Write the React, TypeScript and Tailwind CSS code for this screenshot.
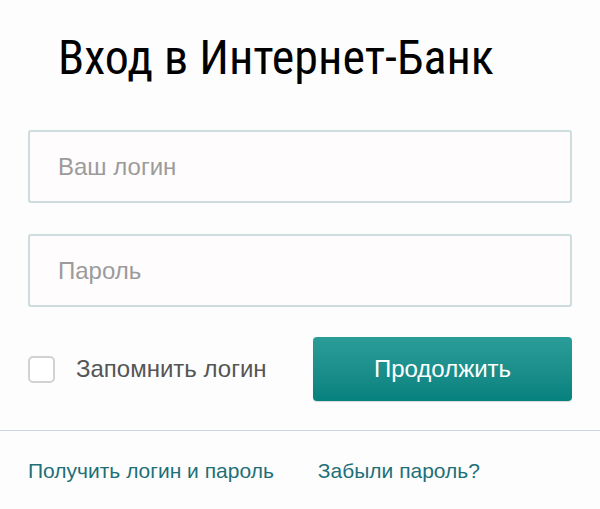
import React, { useState } from 'react';

export default function App() {
  const [login, setLogin] = useState('');
  const [password, setPassword] = useState('');
  const [remember, setRemember] = useState(false);

  return (
    <div className="min-h-[509px] bg-[#fdfdfd] font-['Liberation_Sans',Arial,sans-serif]">
      {/* Form */}
      <div className="px-[28px] pt-[34px]">
        <h1 className="pl-[30px] h-[48px] text-[48px] leading-[48px] text-black font-['Roboto_Condensed','DejaVu_Sans_Condensed',sans-serif] font-normal whitespace-nowrap">
          Вход в Интернет-Банк
        </h1>

        <div className="mt-[48px] flex flex-col gap-[31px]">
          <input
            type="text"
            value={login}
            onChange={(e) => setLogin(e.target.value)}
            placeholder="Ваш логин"
            className="h-[73px] w-full rounded-[3px] border-2 border-[#cddcdc] bg-[#fffcfd] pl-[28px] text-[24px] text-[#333] placeholder-[#9b9b9b] outline-none"
          />
          <input
            type="password"
            value={password}
            onChange={(e) => setPassword(e.target.value)}
            placeholder="Пароль"
            className="h-[73px] w-full rounded-[3px] border-2 border-[#cddcdc] bg-[#fffcfd] pl-[28px] text-[24px] text-[#333] placeholder-[#9b9b9b] outline-none"
          />
        </div>

        <div className="mt-[30px] flex items-center">
          <label className="flex items-center gap-[21px] cursor-pointer">
            <input
              type="checkbox"
              checked={remember}
              onChange={(e) => setRemember(e.target.checked)}
              className="peer sr-only"
            />
            <span className="h-[27px] w-[27px] rounded-[5px] border-2 border-[#d2d2d2] bg-white" />
            <span className="text-[24px] text-[#555]">Запомнить логин</span>
          </label>
          <button className="ml-auto h-[64px] w-[259px] rounded-[4px] bg-gradient-to-b from-[#2b9d99] to-[#06817e] text-[24px] text-white shadow-[0_1px_1px_rgba(0,0,0,0.15)]">
            Продолжить
          </button>
        </div>
      </div>

      {/* Links */}
      <div className="mt-[29px] border-t border-[#cbd6e6] px-[28px] pt-[28px]">
        <div className="flex gap-[44px] text-[21px] leading-[24px] text-[#1d7077]">
          <a href="#" className="whitespace-nowrap">Получить логин и пароль</a>
          <a href="#" className="whitespace-nowrap">Забыли пароль?</a>
        </div>
      </div>
    </div>
  );
}
